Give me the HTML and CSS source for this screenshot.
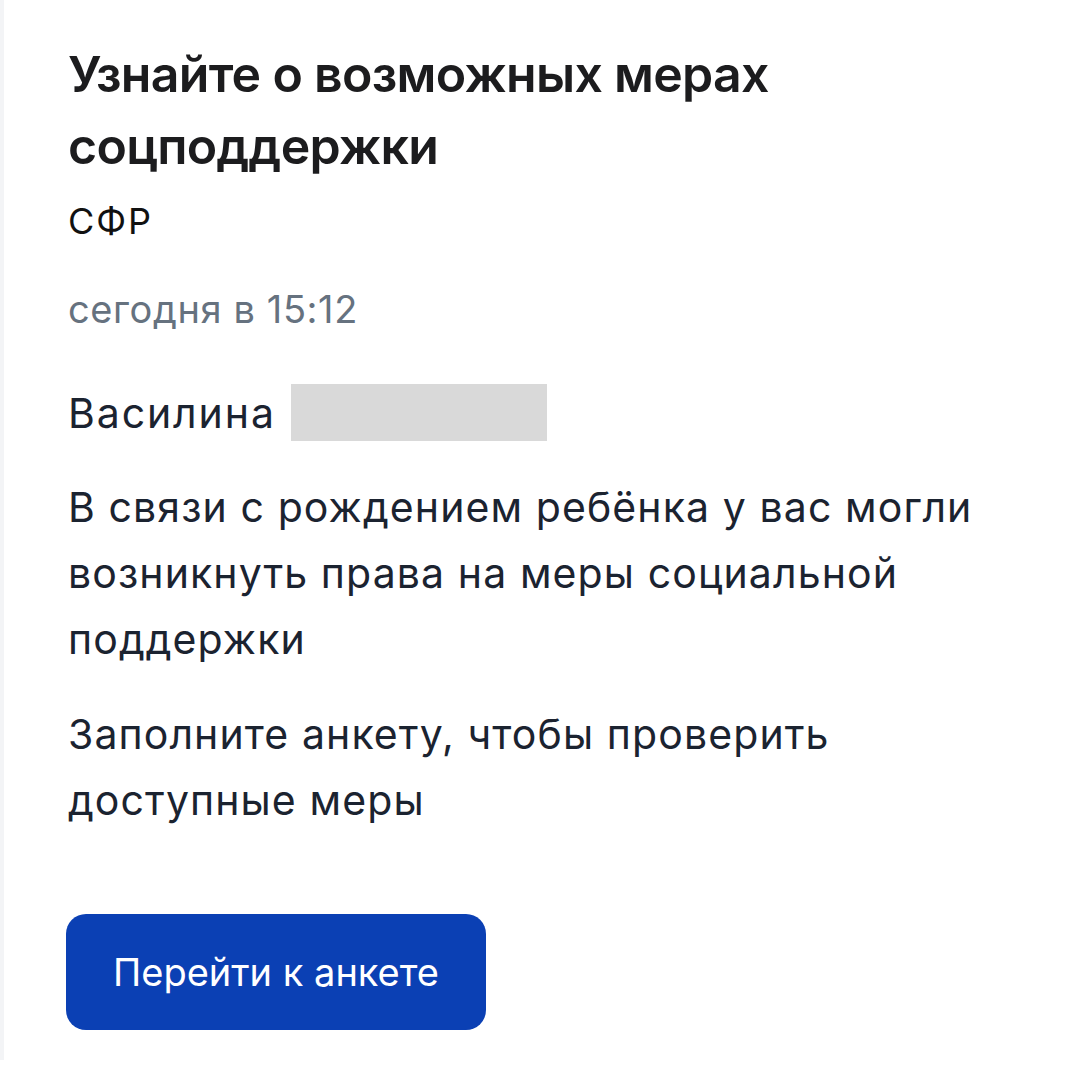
FILE: index.html
```html
<!DOCTYPE html>
<html lang="ru">
<head>
<meta charset="utf-8">
<title>Уведомление</title>
<link rel="stylesheet" href="styles.css">
</head>
<body>
<div class="card">
  <h1 class="title">Узнайте о возможных мерах соцподдержки</h1>
  <div class="sender">СФР</div>
  <div class="time">сегодня в 15:12</div>
  <p class="greet">Василина <span class="redact"></span></p>
  <p class="text p1">В связи с рождением ребёнка у вас могли возникнуть права на меры социальной поддержки</p>
  <p class="text p2">Заполните анкету, чтобы проверить доступные меры</p>
  <a class="btn" href="#">Перейти к анкете</a>
</div>
</body>
</html>
```

FILE: styles.css
```css
html, body {
  margin: 0;
  padding: 0;
  background: #ffffff;
}
body {
  font-family: Inter, "Liberation Sans", Arial, sans-serif;
  width: 1080px;
  height: 1080px;
  overflow: hidden;
}
.card {
  box-sizing: border-box;
  height: 1060px;
  border-left: 4px solid #f3f4f6;
  padding: 38px 80px 0 64px;
  display: flex;
  flex-direction: column;
  align-items: flex-start;
}
.title {
  margin: 0;
  font-size: 50px;
  line-height: 72px;
  font-weight: 600;
  color: #1c1c1e;
  letter-spacing: -0.7px;
}
.sender {
  margin-top: 17px;
  font-size: 36px;
  line-height: 44px;
  color: #111111;
  letter-spacing: 2px;
}
.time {
  margin-top: 42px;
  font-size: 38px;
  line-height: 48px;
  color: #66727f;
  letter-spacing: 0.6px;
}
.greet {
  margin: 47px 0 0;
  font-size: 41px;
  line-height: 66px;
  color: #1b2330;
  letter-spacing: 1.9px;
}
.redact {
  display: inline-block;
  width: 256px;
  height: 57px;
  margin-left: 2px;
  background: #d9d9d9;
  vertical-align: -13px;
}
.text {
  margin: 0;
  font-size: 41px;
  line-height: 66px;
  color: #1b2330;
  letter-spacing: 1.1px;
}
.p1 { margin-top: 28px; }
.p2 { margin-top: 29px; }
.btn {
  margin-top: 81px;
  margin-left: -2px;
  width: 420px;
  height: 116px;
  border-radius: 20px;
  background: #0b40b4;
  color: #ffffff;
  text-decoration: none;
  font-size: 38px;
  display: flex;
  align-items: center;
  justify-content: center;
}
```
